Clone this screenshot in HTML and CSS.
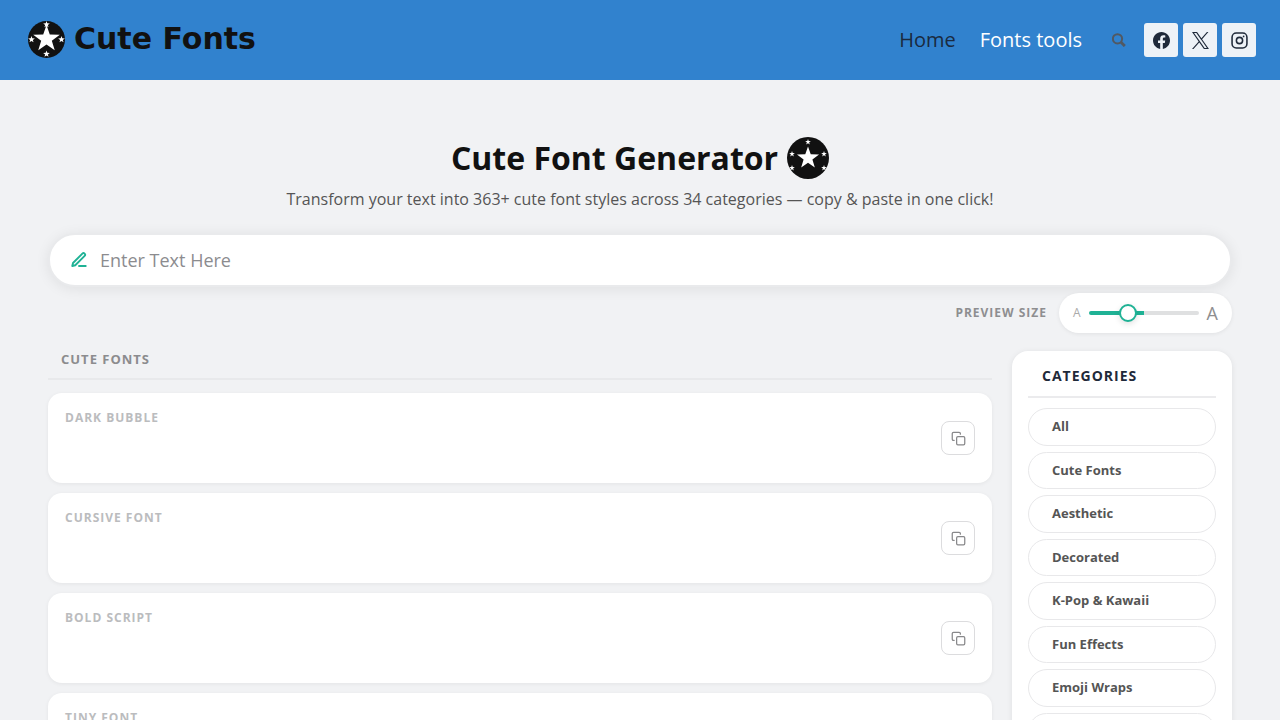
FILE: index.html
```html
<!DOCTYPE html>
<html lang="en">
<head>
<meta charset="utf-8">
<meta name="viewport" content="width=device-width, initial-scale=1">
<title>Cute Font Generator</title>
<link rel="stylesheet" href="styles.css">
</head>
<body>
<svg class="defs" aria-hidden="true">
  <defs>
    <path id="star" d="M0-10 2.35-3.24 9.51-3.09 3.8 1.24 5.88 8.09 0 4 -5.88 8.09 -3.8 1.24 -9.51-3.09 -2.35-3.24Z"/>
    <symbol id="copy" viewBox="0 0 24 24">
      <rect x="9" y="9" width="13" height="13" rx="2"/>
      <path d="M5 15H4a2 2 0 0 1-2-2V4a2 2 0 0 1 2-2h9a2 2 0 0 1 2 2v1"/>
    </symbol>
  </defs>
</svg>

<header class="site-header">
  <a class="brand" href="#">
    <svg class="brand-logo" viewBox="0 0 38 38" aria-hidden="true">
      <circle cx="18.500" cy="19.500" r="18.500" fill="#111"/>
      <g fill="#fff">
        <use href="#star" transform="translate(18.500 19) scale(1.400)"/>
        <use href="#star" transform="translate(18.500 4.500) scale(.35)"/>
        <use href="#star" transform="translate(3.500 19.500) scale(.35)"/>
        <use href="#star" transform="translate(33.500 19.500) scale(.35)"/>
        <use href="#star" transform="translate(18.500 34) scale(.35)"/>
      </g>
    </svg>
    <span>Cute Fonts</span>
  </a>
  <nav class="nav">
    <a class="nav-link current" href="#">Home</a>
    <a class="nav-link" href="#">Fonts tools</a>
  </nav>
  <button class="search" type="button" aria-label="Search">
    <svg viewBox="0 0 14 14" aria-hidden="true"><circle cx="5.500" cy="5.800" r="4.600"/><path d="M9 9.300l3.800 3.800" stroke-width="2.800"/></svg>
  </button>
  <div class="socials">
    <a class="social" href="#" aria-label="Facebook">
      <svg viewBox="0 0 24 24" aria-hidden="true"><path d="M24 12.07C24 5.41 18.63 0 12 0S0 5.41 0 12.07c0 6.03 4.39 11.02 10.13 11.93v-8.44H7.08v-3.49h3.05V9.41c0-3.02 1.79-4.69 4.53-4.69 1.31 0 2.69.24 2.69.24v2.97h-1.52c-1.49 0-1.96.93-1.96 1.89v2.25h3.33l-.53 3.49h-2.8V24C19.61 23.09 24 18.1 24 12.07Z"/></svg>
    </a>
    <a class="social" href="#" aria-label="X">
      <svg viewBox="0 0 24 24" aria-hidden="true"><path d="M14.258 10.152 23.176 0h-2.113l-7.747 8.813L7.133 0H0l9.352 13.328L0 23.973h2.113l8.176-9.309 6.531 9.309h7.133ZM11.363 13.445l-.949-1.328L2.875 1.560h3.246l6.086 8.523.945 1.328 7.910 11.078h-3.246Z"/></svg>
    </a>
    <a class="social" href="#" aria-label="Instagram">
      <svg viewBox="0 0 24 24" aria-hidden="true"><rect x="1.500" y="1.500" width="21" height="21" rx="6" fill="none" stroke="#1f2a3a" stroke-width="2.200"/><circle cx="12" cy="12" r="4.400" fill="none" stroke="#1f2a3a" stroke-width="2.200"/><circle cx="17.800" cy="6.200" r="1.200"/></svg>
    </a>
  </div>
</header>

<main class="page">
  <div class="hero">
    <h1>Cute Font Generator
      <svg class="hero-logo" viewBox="0 0 42 42" aria-hidden="true">
        <circle cx="21" cy="21" r="21" fill="#111"/>
        <g fill="#fff">
          <use href="#star" transform="translate(21 21) scale(1.160)"/>
          <use href="#star" transform="translate(21 5) scale(.3)"/>
          <use href="#star" transform="translate(5 17) scale(.3)"/>
          <use href="#star" transform="translate(37 17) scale(.3)"/>
          <use href="#star" transform="translate(5 31) scale(.3)"/>
          <use href="#star" transform="translate(37 31) scale(.3)"/>
        </g>
      </svg>
    </h1>
    <p>Transform your text into 363+ cute font styles across 34 categories — copy &amp; paste in one click!</p>
  </div>

  <div class="entry">
    <svg viewBox="0 0 24 24" aria-hidden="true"><path d="M12 20h9"/><path d="M16.500 3.500a2.120 2.120 0 0 1 3 3L7 19l-4 1 1-4Z"/></svg>
    <input type="text" placeholder="Enter Text Here" aria-label="Enter Text Here">
  </div>

  <div class="size-row">
    <label for="size">Preview size</label>
    <div class="size-pill">
      <span class="small-a">A</span>
      <input id="size" type="range" min="12" max="48" value="24">
      <span class="large-a">A</span>
    </div>
  </div>

  <div class="columns">
    <section class="results">
      <h2>Cute Fonts</h2>
      <article class="card"><h3>Dark Bubble</h3><button class="copy" type="button" aria-label="Copy"><svg aria-hidden="true"><use href="#copy"/></svg></button></article>
      <article class="card"><h3>Cursive Font</h3><button class="copy" type="button" aria-label="Copy"><svg aria-hidden="true"><use href="#copy"/></svg></button></article>
      <article class="card"><h3>Bold Script</h3><button class="copy" type="button" aria-label="Copy"><svg aria-hidden="true"><use href="#copy"/></svg></button></article>
      <article class="card"><h3>Tiny Font</h3><button class="copy" type="button" aria-label="Copy"><svg aria-hidden="true"><use href="#copy"/></svg></button></article>
    </section>
    <aside class="sidebar">
      <h2>Categories</h2>
      <div class="cats">
        <button type="button">All</button>
        <button type="button">Cute Fonts</button>
        <button type="button">Aesthetic</button>
        <button type="button">Decorated</button>
        <button type="button">K-Pop &amp; Kawaii</button>
        <button type="button">Fun Effects</button>
        <button type="button">Emoji Wraps</button>
        <button type="button" aria-label="More categories">&nbsp;</button>
      </div>
    </aside>
  </div>
</main>
</body>
</html>
```

FILE: styles.css
```css
* {
  box-sizing: border-box;
}

html {
  height: 100%;
  overflow: hidden;
}

body {
  margin: 0;
  background: #f1f2f4;
  color: #111;
  font-family: "Open Sans", "Noto Sans", sans-serif;
  font-size: 16px;
  line-height: 1.5;
}

h1, h2, h3, p {
  margin: 0;
}

button, input {
  font: inherit;
}

a {
  color: inherit;
  text-decoration: none;
}

.defs {
  display: none;
}

.site-header {
  display: flex;
  align-items: center;
  min-height: 80px;
  padding: 0 24px 0 28px;
  background: #3182ce;
}

.brand {
  display: flex;
  align-items: center;
  gap: 8px;
  margin-right: auto;
  padding-bottom: 2px;
  font: bold 30px/38px "DejaVu Sans", sans-serif;
}

.brand-logo {
  width: 38px;
  height: 38px;
}

.nav {
  display: flex;
  gap: 24px;
  font-size: 20px;
}

.nav-link {
  color: #fff;
}

.nav-link.current {
  color: #1a2a40;
}

.search {
  display: flex;
  margin: 0 18px 0 30px;
  padding: 0;
  border: 0;
  background: none;
}

.search svg {
  width: 14px;
  height: 14px;
  fill: none;
  stroke: #515862;
  stroke-width: 2;
}

.socials {
  display: flex;
  gap: 5px;
}

.social {
  display: grid;
  place-items: center;
  width: 34px;
  height: 34px;
  border-radius: 3px;
  background: #edf2f7;
}

.social svg {
  width: 17px;
  height: 17px;
  fill: #1f2a3a;
}

.page {
  padding: 56px 48px 0;
}

.hero {
  text-align: center;
}

.hero h1 {
  display: flex;
  justify-content: center;
  align-items: center;
  gap: 9px;
  font-size: 32px;
  line-height: 44px;
}

.hero-logo {
  width: 42px;
  height: 42px;
}

.hero p {
  margin-top: 7px;
  color: #555;
}

.entry {
  display: flex;
  align-items: center;
  gap: 12px;
  height: 54px;
  margin-top: 22px;
  padding: 0 20px;
  border: 2px solid #e9eaec;
  border-radius: 27px;
  background: #fff;
  box-shadow: 0 2px 14px rgba(0, 0, 0, 0.08);
}

.entry svg {
  width: 18px;
  height: 18px;
  fill: none;
  stroke: #1fb295;
  stroke-width: 2.5;
  stroke-linecap: round;
  stroke-linejoin: round;
}

.entry input {
  flex: 1;
  padding: 0;
  border: 0;
  outline: 0;
  background: none;
  font-size: 18px;
}

.entry input::placeholder {
  color: #8c8c8f;
}

.size-row {
  display: flex;
  justify-content: flex-end;
  align-items: center;
  gap: 12px;
  margin-top: 6px;
  color: #8e8e90;
}

.size-row label {
  font-size: 12px;
  font-weight: 700;
  letter-spacing: 1px;
  text-transform: uppercase;
}

.size-pill {
  display: flex;
  align-items: center;
  gap: 8px;
  height: 40px;
  padding: 0 14px;
  border-radius: 20px;
  background: #fff;
  box-shadow: 0 1px 4px rgba(0, 0, 0, 0.07);
}

.small-a {
  color: #aaa;
  font-size: 12px;
}

.large-a {
  font-size: 18px;
}

.size-pill input {
  width: 110px;
  height: 4px;
  margin: 0;
  border-radius: 2px;
  appearance: none;
  background: linear-gradient(to right, #1fb295 50%, #dfe0e1 50%);
}

.size-pill input::-webkit-slider-thumb {
  width: 18px;
  height: 18px;
  border: 2px solid #1fb295;
  border-radius: 50%;
  appearance: none;
  background: #fff;
  box-shadow: 0 2px 6px rgba(0, 0, 0, 0.12);
}

.columns {
  display: grid;
  grid-template-columns: 1fr 220px;
  align-items: start;
  gap: 20px;
  margin-top: 18px;
}

.results {
  display: grid;
  gap: 10px;
}

.results h2 {
  margin-bottom: 3px;
  padding: 0 13px 10px;
  border-bottom: 2px solid #e8e9eb;
  color: #8c8c8e;
  font-size: 13px;
  font-weight: 700;
  line-height: 17px;
  letter-spacing: 1px;
  text-transform: uppercase;
}

.card {
  display: flex;
  justify-content: space-between;
  align-items: center;
  height: 90px;
  padding: 0 17px;
  border-radius: 14px;
  background: #fff;
  box-shadow: 0 1px 4px rgba(0, 0, 0, 0.06);
}

.card h3 {
  align-self: flex-start;
  padding-top: 16px;
  color: #bbbcbe;
  font-size: 12px;
  font-weight: 700;
  letter-spacing: 1px;
  text-transform: uppercase;
}

.copy {
  display: grid;
  place-items: center;
  width: 34px;
  height: 34px;
  padding: 0;
  border: 1px solid #dcdcde;
  border-radius: 8px;
  background: #fff;
}

.copy svg {
  width: 15px;
  height: 15px;
  fill: none;
  stroke: #88888a;
  stroke-width: 2;
  stroke-linecap: round;
  stroke-linejoin: round;
}

.sidebar {
  padding: 16px;
  border-radius: 16px;
  background: #fff;
  box-shadow: 0 1px 6px rgba(0, 0, 0, 0.08);
}

.sidebar h2 {
  margin-bottom: 10px;
  padding: 0 14px 11px;
  border-bottom: 2px solid #ebebed;
  color: #1f2a3a;
  font-size: 14px;
  font-weight: 700;
  line-height: 18px;
  letter-spacing: 1px;
  text-transform: uppercase;
}

.cats {
  display: grid;
  gap: 6px;
}

.cats button {
  padding: 8px 23px;
  border: 1px solid #e8e8ea;
  border-radius: 20px;
  background: #fff;
  color: #555;
  font-size: 13px;
  font-weight: 700;
  line-height: 1.5;
  text-align: left;
}
```
